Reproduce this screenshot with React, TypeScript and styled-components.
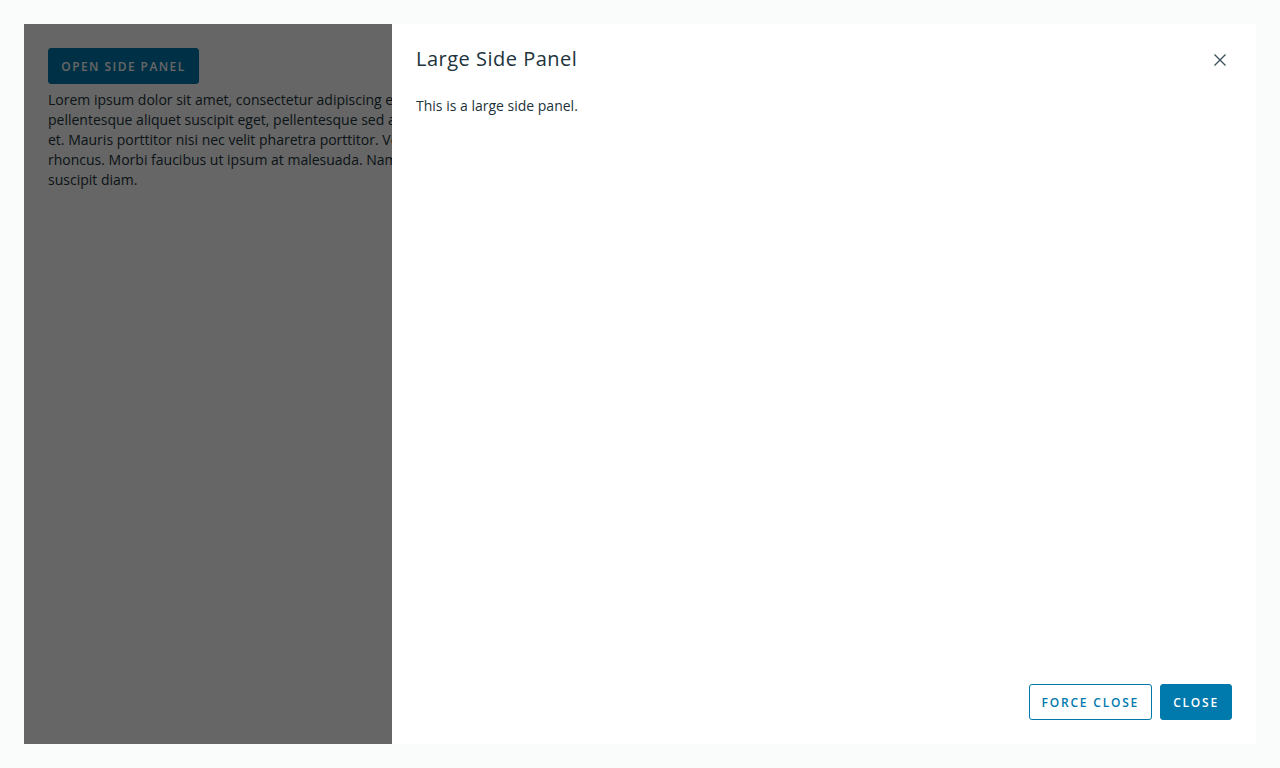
import React from "react";
import styled, { createGlobalStyle } from "styled-components";

const Global = createGlobalStyle`
  html, body { margin: 0; padding: 0; }
  body {
    background: #fafcfc;
    font-family: "Open Sans", "Lato", sans-serif;
    color: #21333b;
  }
  * { box-sizing: border-box; }
`;

const Page = styled.div`
  padding: 24px;
  height: 768px;
`;

const Stage = styled.div`
  position: relative;
  height: 720px;
  background: #ffffff;
  padding: 24px;
  overflow: hidden;
`;

const Button = styled.button<{ $variant?: "solid" | "outline" }>`
  height: 36px;
  padding: 0 12px;
  border-radius: 3px;
  font-family: "Open Sans", "Lato", sans-serif;
  font-size: 12px;
  font-weight: 600;
  letter-spacing: 0.15em;
  text-transform: uppercase;
  cursor: pointer;
  border: 1px solid #0079ad;
  background: ${(p) => (p.$variant === "outline" ? "#ffffff" : "#0079ad")};
  color: ${(p) => (p.$variant === "outline" ? "#0079ad" : "#ffffff")};
`;

const OpenButton = styled(Button)`
  width: 151px;
  padding: 0;
  letter-spacing: 0.12em;
  margin-bottom: 6px;
`;

const Lorem = styled.p`
  margin: 0;
  font-size: 14px;
  line-height: 20px;
  color: #21333b;
  white-space: nowrap;
`;

const Backdrop = styled.div`
  position: absolute;
  inset: 0;
  background: rgba(0, 0, 0, 0.6);
`;

const Panel = styled.aside`
  position: absolute;
  top: 0;
  right: 0;
  bottom: 0;
  width: 864px;
  background: #ffffff;
  display: flex;
  flex-direction: column;
  padding: 24px;
`;

const Header = styled.div`
  display: flex;
  align-items: center;
  justify-content: space-between;
  height: 22px;
`;

const Title = styled.h2`
  margin: 0;
  font-size: 20px;
  font-weight: 400;
  line-height: 22px;
  letter-spacing: 0.5px;
  color: #21333b;
`;

const CloseX = styled.button`
  width: 24px;
  height: 24px;
  border: 0;
  background: transparent;
  padding: 0;
  margin-top: 2px;
  display: flex;
  align-items: center;
  justify-content: center;
  cursor: pointer;
`;

const Body = styled.div`
  flex: 1;
  padding-top: 26px;
  font-size: 14px;
  line-height: 20px;
  color: #21333b;
`;

const Footer = styled.div`
  display: flex;
  justify-content: flex-end;
  gap: 8px;
`;

export default function App() {
  return (
    <>
      <Global />
      <Page>
        <Stage>
          <OpenButton>Open side panel</OpenButton>
          <Lorem>
            Lorem ipsum dolor sit amet, consectetur adipiscing elit. Nullam vitae sem ac lorem tincidunt dictum, nec luctus augue. Aliquam
            <br />
            pellentesque aliquet suscipit eget, pellentesque sed arcu. Donec sit amet massa vel elit sagittis finibus at ac magna lorem
            <br />
            et. Mauris porttitor nisi nec velit pharetra porttitor. Vestibulum ante ipsum primis in faucibus orci luctus et ultrices
            <br />
            rhoncus. Morbi faucibus ut ipsum at malesuada. Nam aliquam, ligula quis faucibus euismod, est turpis tempus lacus, eget
            <br />
            suscipit diam.
          </Lorem>
          <Backdrop />
          <Panel>
            <Header>
              <Title>Large Side Panel</Title>
              <CloseX aria-label="Close">
                <svg width="14" height="14" viewBox="0 0 14 14">
                  <path d="M1.5 1.5 L12.5 12.5 M12.5 1.5 L1.5 12.5" stroke="#3f535d" strokeWidth="1.4" fill="none" />
                </svg>
              </CloseX>
            </Header>
            <Body>This is a large side panel.</Body>
            <Footer>
              <Button $variant="outline">Force close</Button>
              <Button>Close</Button>
            </Footer>
          </Panel>
        </Stage>
      </Page>
    </>
  );
}
